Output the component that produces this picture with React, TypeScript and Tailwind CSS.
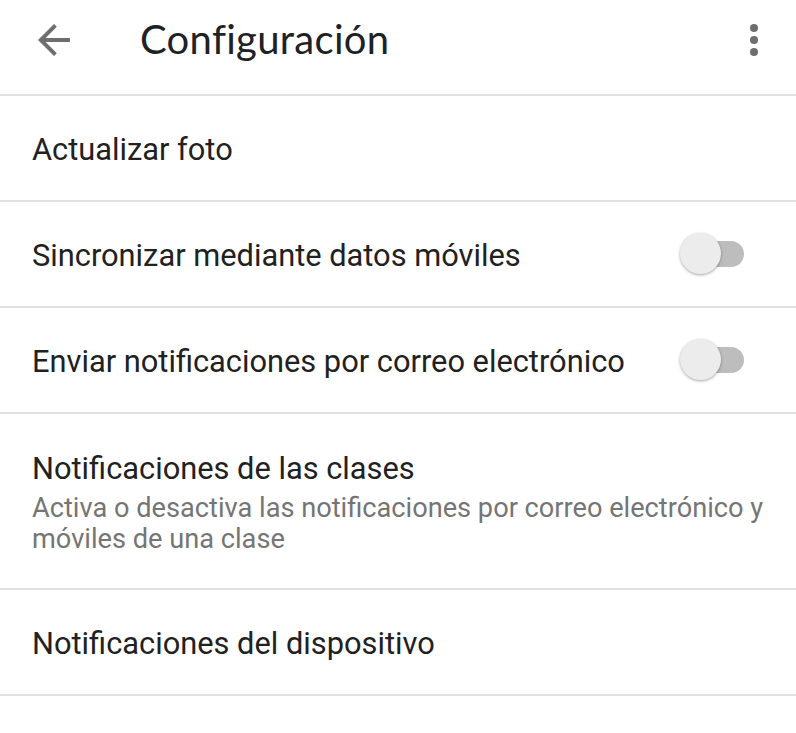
import React from 'react';

function Toggle() {
  return (
    <div className="relative w-[64px] h-[42px] shrink-0">
      <div className="absolute left-[20px] top-[8px] w-[44px] h-[26px] rounded-full bg-[#bdbdbd]" />
      <div className="absolute left-0 top-0 w-[41px] h-[41px] rounded-full bg-[#ececec] shadow-[0_1px_3px_rgba(0,0,0,0.35)]" />
    </div>
  );
}

function Divider() {
  return <div className="h-[2px] bg-[#e0e0e0]" />;
}

export default function App() {
  return (
    <div className="w-[796px] h-[733px] bg-white overflow-hidden font-['Roboto',sans-serif] text-[#212121]">
      {/* Toolbar */}
      <div className="h-[94px] flex items-center pl-[30px] pr-[38px]">
        <svg width="48" height="48" viewBox="0 0 24 24" className="shrink-0 -mt-[14px]">
          <path d="M20 11H7.83l5.59-5.59L12 4l-8 8 8 8 1.41-1.41L7.83 13H20v-2z" fill="#6e6e6e" />
        </svg>
        <h1 className="ml-[62px] text-[40px] leading-none text-[#202124] font-['Lato','Open_Sans',sans-serif] tracking-[0.3px] -mt-[16px]">
          Configuración
        </h1>
        <div className="ml-auto flex flex-col gap-[4px] -mt-[14px]">
          <span className="w-[8px] h-[8px] rounded-full bg-[#6e6e6e]" />
          <span className="w-[8px] h-[8px] rounded-full bg-[#6e6e6e]" />
          <span className="w-[8px] h-[8px] rounded-full bg-[#6e6e6e]" />
        </div>
      </div>
      <Divider />

      <div className="h-[104px] flex items-center pt-[5px] px-[32px] text-[30.8px]">Actualizar foto</div>
      <Divider />

      <div className="h-[104px] flex items-center justify-between pl-[32px] pr-[52px] text-[30.8px]">
        <span className="pt-[5px]">Sincronizar mediante datos móviles</span>
        <Toggle />
      </div>
      <Divider />

      <div className="h-[104px] flex items-center justify-between pl-[32px] pr-[52px] text-[30.8px]">
        <span className="pt-[5px]">Enviar notificaciones por correo electrónico</span>
        <Toggle />
      </div>
      <Divider />

      <div className="h-[174px] flex flex-col pt-[36px] px-[32px]">
        <div className="text-[30.8px] leading-[38px]">Notificaciones de las clases</div>
        <div className="mt-[5px] text-[27.2px] leading-[31px] text-[#757575]">
          Activa o desactiva las notificaciones por correo electrónico y móviles de una clase
        </div>
      </div>
      <Divider />

      <div className="h-[104px] flex items-center pt-[5px] px-[32px] text-[30.8px]">Notificaciones del dispositivo</div>
      <Divider />
    </div>
  );
}
